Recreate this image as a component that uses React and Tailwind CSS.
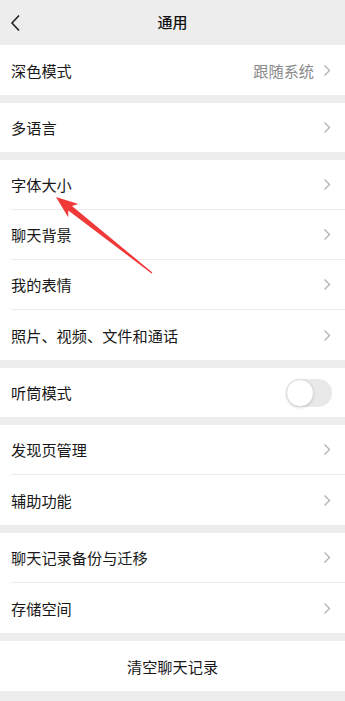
import React from "react";

const Chevron = () => (
  <svg width="8" height="13" viewBox="0 0 8 13" className="shrink-0">
    <path d="M1.5 1.5 L6.5 6.5 L1.5 11.5" fill="none" stroke="#b2b2b2" strokeWidth="1.3" />
  </svg>
);

const Row = ({ label, value, last, toggle, short }) => (
  <div className="pl-[11px] bg-white">
    <div
      className={
        (short ? "h-[49px] " : "h-[50px] ") +
        "flex items-center pr-[14px] " +
        (last ? "" : "border-b border-[#ececec]")
      }
    >
      <span className="flex-1 text-[15.2px] text-[#181818]">{label}</span>
      {value && <span className="text-[15.2px] text-[#8a8a8a] mr-[9px]">{value}</span>}
      {toggle ? (
        <div className="w-[46px] h-[28px] rounded-full bg-[#e9e9e9] relative mr-[-1px]">
          <div className="absolute left-0 top-0 w-[28px] h-[28px] rounded-full bg-white border border-[#dcdcdc] shadow-sm" />
        </div>
      ) : (
        <Chevron />
      )}
    </div>
  </div>
);

const Group = ({ children }) => <div className="mb-[8px]">{children}</div>;

export default function App() {
  return (
    <div
      className="relative w-[345px] h-[701px] bg-[#ededed] overflow-hidden"
      style={{ fontFamily: '"Noto Sans CJK SC", "Noto Sans", sans-serif' }}
    >
      <div className="h-[45px] flex items-center relative">
        <svg width="12" height="18" viewBox="0 0 12 18" className="absolute left-[10px] top-[14px]">
          <path d="M9 1.5 L2 9 L9 16.5" fill="none" stroke="#222" strokeWidth="1.6" />
        </svg>
        <div className="flex-1 text-center text-[15px] font-medium text-[#111]">通用</div>
      </div>
      <Group>
        <Row label="深色模式" value="跟随系统" last />
      </Group>
      <Group>
        <Row label="多语言" last short />
      </Group>
      <Group>
        <Row label="字体大小" />
        <Row label="聊天背景" />
        <Row label="我的表情" />
        <Row label="照片、视频、文件和通话" last />
      </Group>
      <Group>
        <Row label="听筒模式" toggle last short />
      </Group>
      <Group>
        <Row label="发现页管理" />
        <Row label="辅助功能" last />
      </Group>
      <Group>
        <Row label="聊天记录备份与迁移" />
        <Row label="存储空间" last />
      </Group>
      <div className="h-[50px] bg-white flex items-center justify-center text-[15.2px] text-[#181818]">
        清空聊天记录
      </div>
      <svg className="absolute left-0 top-0 pointer-events-none" width="345" height="701" viewBox="0 0 345 701">
        <polygon
          points="56,197 68.2,217.2 68.3,210.6 151.6,273.5 152.4,272.5 72,205.9 78.4,204.1"
          fill="#f03a3a"
        />
      </svg>
    </div>
  );
}
